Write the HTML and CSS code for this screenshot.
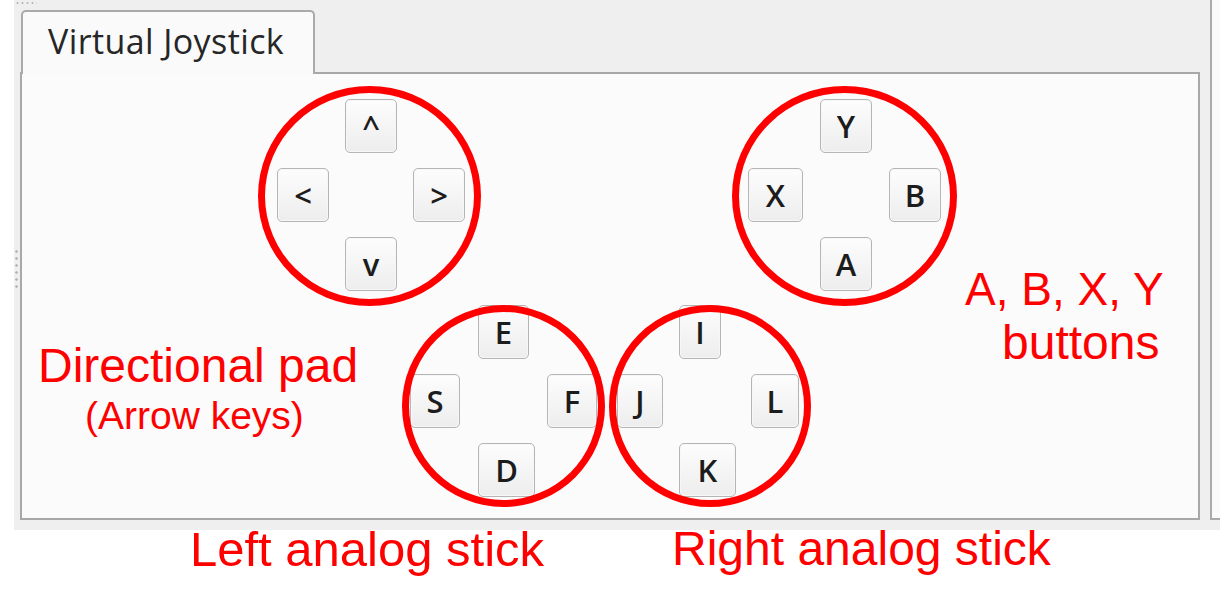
FILE: index.html
```html
<!DOCTYPE html>
<html>
<head>
<meta charset="utf-8">
<link rel="stylesheet" href="styles.css">
</head>
<body>
<div class="app">
  <div class="workspace">
    <div class="grip grip-top"></div>
    <div class="grip grip-left"></div>
    <div class="tabwidget">
      <div class="tabbar">
        <div class="tab">Virtual Joystick</div>
      </div>
      <div class="panel">
        <div class="row row-top">
          <div class="pad pad-dir">
            <span></span><button class="key">^</button><span></span>
            <button class="key">&lt;</button><span></span><button class="key">&gt;</button>
            <span></span><button class="key">v</button><span></span>
          </div>
          <div class="pad pad-abxy">
            <span></span><button class="key">Y</button><span></span>
            <button class="key">X</button><span></span><button class="key">B</button>
            <span></span><button class="key">A</button><span></span>
          </div>
        </div>
        <div class="row row-bottom">
          <div class="pad pad-left">
            <span></span><button class="key">E</button><span></span>
            <button class="key">S</button><span></span><button class="key">F</button>
            <span></span><button class="key key-wide">D</button><span></span>
          </div>
          <div class="pad pad-right">
            <span></span><button class="key key-narrow">I</button><span></span>
            <button class="key">J</button><span></span><button class="key">L</button>
            <span></span><button class="key key-wide">K</button><span></span>
          </div>
        </div>
      </div>
    </div>
    <div class="sidepane"></div>
  </div>
  <div class="note note-dir">Directional pad</div>
  <div class="note note-arrow">(Arrow keys)</div>
  <div class="note note-abxy">A, B, X, Y</div>
  <div class="note note-buttons">buttons</div>
  <div class="note note-lstick">Left analog stick</div>
  <div class="note note-rstick">Right analog stick</div>
</div>
</body>
</html>
```
FILE: styles.css
```css
*, *::before, *::after { box-sizing: border-box; }
html, body { margin: 0; padding: 0; background: #ffffff; }
.app {
  position: relative;
  width: 1220px;
  height: 605px;
  overflow: hidden;
}
.workspace {
  position: relative;
  margin-left: 14px;
  width: 1206px;
  height: 530px;
  background: #efefef;
  display: flex;
  align-items: flex-start;
}
.grip { position: absolute; }
.grip-top {
  left: 1px; top: 2px;
  width: 22px; height: 2px;
  background-image: radial-gradient(circle, #b4b4b4 0.9px, transparent 1.2px);
  background-size: 5px 2px;
}
.grip-left {
  left: 1px; top: 248px;
  width: 3px; height: 40px;
  background-image: radial-gradient(circle, #b8b8b8 1.1px, transparent 1.5px);
  background-size: 3px 7px;
}
.tabwidget {
  margin-left: 6px;
  margin-top: 10px;
  width: 1180px;
  display: flex;
  flex-direction: column;
}
.tabbar { display: flex; height: 62px; }
.tab {
  width: 294px;
  height: 64px;
  margin-left: 1px;
  padding-left: 25px;
  padding-top: 10px;
  border: 2px solid #aaaaaa;
  border-bottom: none;
  border-radius: 5px 5px 0 0;
  background: #fafafa;
  font-family: "Open Sans", "DejaVu Sans", sans-serif;
  font-size: 34px;
  letter-spacing: 0.4px;
  line-height: 39px;
  color: #262626;
  position: relative;
  z-index: 1;
}
.panel {
  height: 448px;
  border: 2px solid #a8a8a8;
  background: #fbfbfb;
  display: flex;
  flex-direction: column;
}
.row { display: flex; align-items: flex-start; }
.row-top { margin-top: 25px; }
.row-bottom { margin-top: 14px; }
.pad {
  position: relative;
  display: grid;
  grid-template-rows: 54px 54px 54px;
  row-gap: 15px;
}
.pad::after {
  content: "";
  position: absolute;
  border: 7px solid #ff0000;
  border-radius: 50%;
  z-index: 2;
  pointer-events: none;
}
.pad-dir {
  margin-left: 255px;
  grid-template-columns: 52px 52px 52px;
  column-gap: 16px;
}
.pad-dir::after { left: -19px; top: -13px; width: 223px; height: 220px; }
.pad-abxy {
  margin-left: 283px;
  grid-template-columns: 55px 52px 52px;
  column-gap: 17px;
}
.pad-abxy::after { left: -16px; top: -13px; width: 225px; height: 220px; }
.pad-left {
  margin-left: 388px;
  grid-template-columns: 50px 51px 50px;
  column-gap: 18px;
}
.pad-left::after { left: -8px; top: 0; width: 203px; height: 202px; }
.pad-right {
  margin-left: 20px;
  grid-template-columns: 46px 56px 48px;
  column-gap: 16px;
}
.pad-right::after { left: -8px; top: 0; width: 202px; height: 202px; }
.key {
  width: 100%;
  height: 54px;
  margin: 0;
  padding: 0;
  border: 1px solid #b5b5b5;
  border-radius: 5px;
  background: linear-gradient(#fdfdfd, #ededed);
  box-shadow: inset 0 0 0 1px #f7f7f7;
  font-family: "Open Sans", "DejaVu Sans", sans-serif;
  font-size: 31px;
  font-weight: 600;
  color: #1c1c1c;
  line-height: 1;
  display: flex;
  align-items: center;
  justify-content: center;
}
.key-wide { width: 57px; }
.key-narrow { width: 42px; justify-self: start; }
.sidepane {
  margin-left: 10px;
  flex: 1;
  height: 520px;
  border-left: 2px solid #aaaaaa;
  border-bottom: 2px solid #aaaaaa;
  background: #fafafa;
}
.note {
  position: absolute;
  font-family: "Liberation Sans", Arial, sans-serif;
  color: #ff0000;
  line-height: 1;
  white-space: nowrap;
  z-index: 3;
}
.note-dir { left: 38px; top: 342px; font-size: 48px; }
.note-arrow { left: 85px; top: 396px; font-size: 39px; }
.note-abxy { left: 965px; top: 266px; font-size: 46px; }
.note-buttons { left: 1002px; top: 319px; font-size: 48px; }
.note-lstick { left: 190px; top: 525px; font-size: 49px; }
.note-rstick { left: 672px; top: 525px; font-size: 48px; }
```
